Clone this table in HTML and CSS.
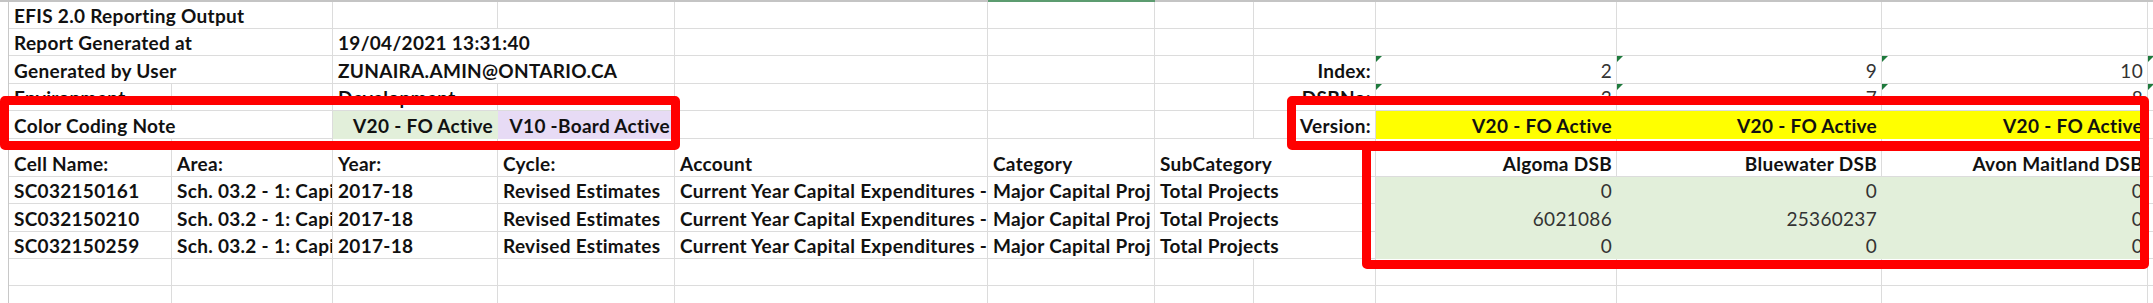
FILE: index.html
```html
<!DOCTYPE html>
<html lang="en">
<head>
<meta charset="utf-8">
<title>EFIS 2.0 Reporting Output</title>
<link rel="stylesheet" href="styles.css">
</head>
<body>
<div class="sheet">
  <div class="tb s6"></div><div class="tb sel"></div><div class="tb s6"></div>

  <div class="rh"></div>
  <div class="c s2">EFIS 2.0 Reporting Output</div>
  <div class="c"></div><div class="c"></div><div class="c"></div><div class="c"></div><div class="c"></div><div class="c"></div><div class="c"></div><div class="c"></div><div class="c"></div><div class="c"></div>

  <div class="rh"></div>
  <div class="c s2">Report Generated at</div>
  <div class="c s2">19/04/2021 13:31:40</div>
  <div class="c"></div><div class="c"></div><div class="c"></div><div class="c"></div><div class="c"></div><div class="c"></div><div class="c"></div><div class="c"></div>

  <div class="rh"></div>
  <div class="c s2">Generated by User</div>
  <div class="c s2">ZUNAIRA.AMIN@ONTARIO.CA</div>
  <div class="c"></div><div class="c"></div><div class="c"></div>
  <div class="c r">Index:</div>
  <div class="c r n tri">2</div><div class="c r n tri">9</div><div class="c r n tri">10</div><div class="c tri"></div>

  <div class="rh"></div>
  <div class="c">Environment</div>
  <div class="c"></div>
  <div class="c">Development</div>
  <div class="c"></div><div class="c"></div><div class="c"></div><div class="c"></div>
  <div class="c r">DSBNo:</div>
  <div class="c r n tri">3</div><div class="c r n tri">7</div><div class="c r n tri">8</div><div class="c tri"></div>

  <div class="rh"></div>
  <div class="c s2">Color Coding Note</div>
  <div class="c r fg">V20 - FO Active</div>
  <div class="c r fp">V10 -Board Active</div>
  <div class="c"></div><div class="c"></div><div class="c"></div>
  <div class="c r">Version:</div>
  <div class="c r fy">V20 - FO Active</div><div class="c r fy">V20 - FO Active</div><div class="c r fy">V20 - FO Active</div>
  <div class="c"></div>

  <div class="rh"></div>
  <div class="c">Cell Name:</div>
  <div class="c">Area:</div>
  <div class="c">Year:</div>
  <div class="c">Cycle:</div>
  <div class="c">Account</div>
  <div class="c">Category</div>
  <div class="c s2">SubCategory</div>
  <div class="c r">Algoma DSB</div>
  <div class="c r">Bluewater DSB</div>
  <div class="c r">Avon Maitland DSB</div>
  <div class="c"></div>

  <div class="rh"></div>
  <div class="c">SC032150161</div>
  <div class="c">Sch. 03.2 - 1: Capi</div>
  <div class="c">2017-18</div>
  <div class="c">Revised Estimates</div>
  <div class="c">Current Year Capital Expenditures -</div>
  <div class="c">Major Capital Proj</div>
  <div class="c s2">Total Projects</div>
  <div class="c r n fg">0</div><div class="c r n fg">0</div><div class="c r n fg">0</div>
  <div class="c"></div>

  <div class="rh"></div>
  <div class="c">SC032150210</div>
  <div class="c">Sch. 03.2 - 1: Capi</div>
  <div class="c">2017-18</div>
  <div class="c">Revised Estimates</div>
  <div class="c">Current Year Capital Expenditures -</div>
  <div class="c">Major Capital Proj</div>
  <div class="c s2">Total Projects</div>
  <div class="c r n fg">6021086</div><div class="c r n fg">25360237</div><div class="c r n fg">0</div>
  <div class="c"></div>

  <div class="rh"></div>
  <div class="c">SC032150259</div>
  <div class="c">Sch. 03.2 - 1: Capi</div>
  <div class="c">2017-18</div>
  <div class="c">Revised Estimates</div>
  <div class="c">Current Year Capital Expenditures -</div>
  <div class="c">Major Capital Proj</div>
  <div class="c s2">Total Projects</div>
  <div class="c r n fg">0</div><div class="c r n fg">0</div><div class="c r n fg">0</div>
  <div class="c"></div>

  <div class="rh"></div>
  <div class="c"></div><div class="c"></div><div class="c"></div><div class="c"></div><div class="c"></div><div class="c"></div><div class="c"></div><div class="c"></div><div class="c"></div><div class="c"></div><div class="c"></div><div class="c"></div>

  <div class="rh"></div>
  <div class="c"></div><div class="c"></div><div class="c"></div><div class="c"></div><div class="c"></div><div class="c"></div><div class="c"></div><div class="c"></div><div class="c"></div><div class="c"></div><div class="c"></div><div class="c"></div>

  <div class="anno anno-note"></div>
  <div class="anno anno-version"></div>
  <div class="anno anno-data"></div>
</div>
</body>
</html>
```

FILE: styles.css
```css
html, body {
  margin: 0;
  padding: 0;
  background: #ffffff;
}

body {
  width: 2153px;
  height: 303px;
  overflow: hidden;
  font-family: Lato, "Open Sans", "Liberation Sans", sans-serif;
}

.sheet {
  position: relative;
  display: grid;
  grid-template-columns: 9px 163px 161px 165px 177px 313px 167px 99px 122px 241px 265px 266px 1fr;
  grid-template-rows: 2px 27px 27px 28px 27px 28px 38px 27px 28px 27px 27px 18px;
  width: 2153px;
  height: 303px;
  overflow: hidden;
}

.tb {
  background: #c4c4c4;
}
.tb.s6 {
  grid-column: span 6;
}
.tb.sel {
  background: #5c9c70;
}

.rh {
  border-right: 1px solid #c8c8c8;
}

.c {
  position: relative;
  display: flex;
  align-items: flex-end;
  min-width: 0;
  padding: 0 4px 2px 5px;
  border-right: 1px solid #dcdcdc;
  border-bottom: 1px solid #dcdcdc;
  font-size: 19px;
  line-height: 20px;
  letter-spacing: 0.3px;
  font-weight: 700;
  color: #111111;
  white-space: nowrap;
  overflow: hidden;
}

.s2 {
  grid-column: span 2;
}

.r {
  justify-content: flex-end;
}

.n {
  font-weight: 400;
  color: #333333;
}

.fg {
  background: #e2efda;
  border-color: transparent;
}
.fp {
  background: #e7dbf5;
  border-color: transparent;
}
.fy {
  background: #ffff00;
  border-color: transparent;
}

.tri::before {
  content: "";
  position: absolute;
  left: 0;
  top: 0;
  border-top: 6px solid #1e7a3c;
  border-right: 6px solid transparent;
}

.anno {
  position: absolute;
  box-sizing: border-box;
  border: 9px solid #ff0000;
  border-radius: 5px;
  pointer-events: none;
}
.anno-note {
  left: 0;
  top: 96px;
  width: 680px;
  height: 54px;
}
.anno-version {
  left: 1287px;
  top: 96px;
  width: 862px;
  height: 54px;
}
.anno-data {
  left: 1362px;
  top: 142px;
  width: 787px;
  height: 127px;
}
```
